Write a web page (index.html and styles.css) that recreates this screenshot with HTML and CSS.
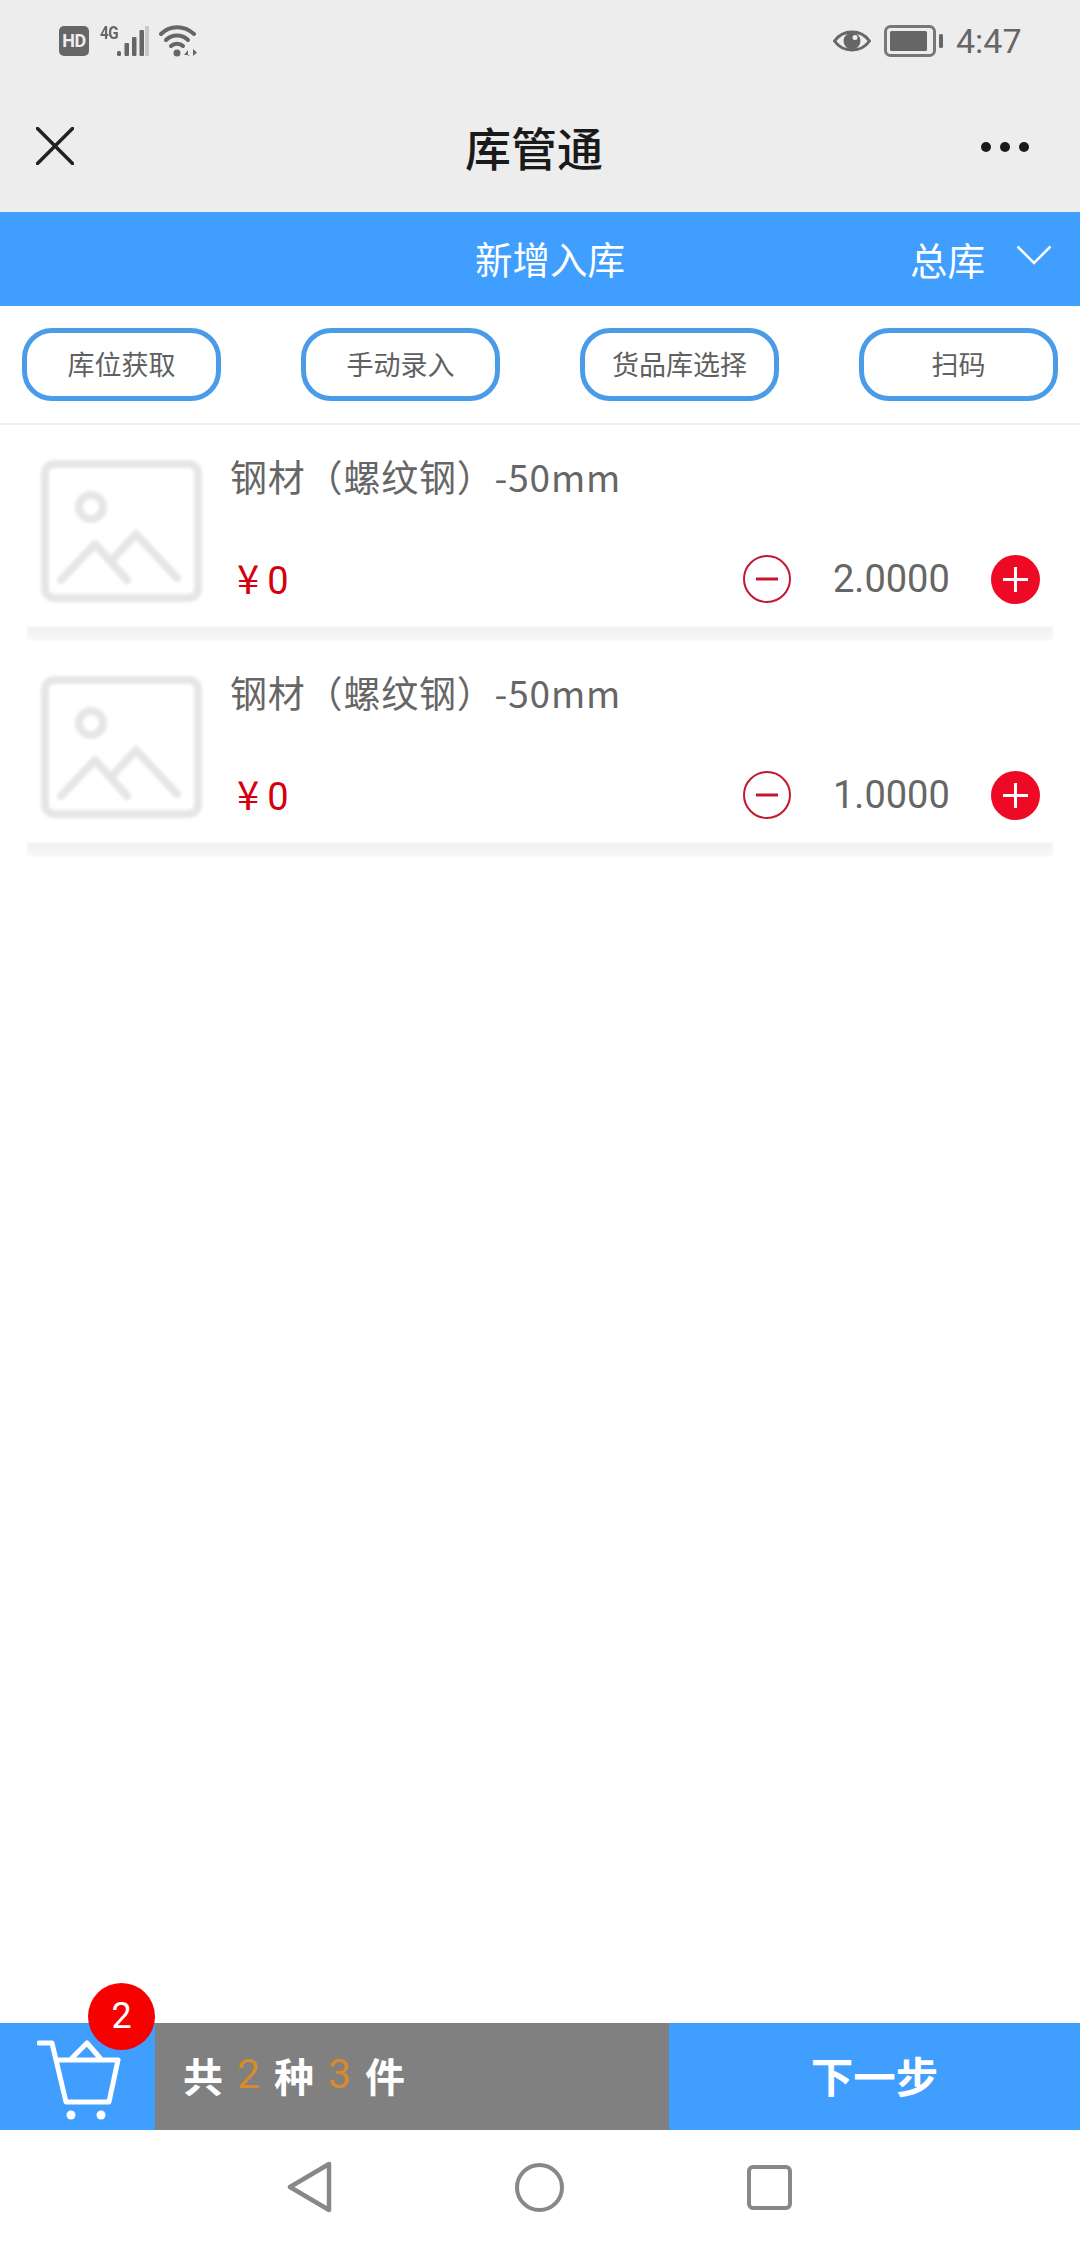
FILE: index.html
```html
<!DOCTYPE html>
<html lang="zh-CN">
<head>
<meta charset="utf-8">
<title>库管通</title>
<link rel="stylesheet" href="styles.css">
</head>
<body>
<div class="app">
  <header class="top">
    <div class="status">
      <div class="status-left">
        <span class="hd">HD</span>
        <div class="signal">
          <span class="net">4G</span>
          <svg class="bars" width="32" height="30" viewBox="0 0 32 30"><g fill="#666"><rect x="0" y="25" width="4" height="5" rx="1.5"/><rect x="7.500" y="17" width="4.500" height="13" rx="1"/><rect x="15" y="11" width="4.500" height="19" rx="1"/><rect x="22.500" y="4" width="4.500" height="26" rx="1"/></g><rect x="28" y="0" width="4" height="30" fill="#c9c9c9"/></svg>
        </div>
        <svg class="wifi" width="38" height="32" viewBox="0 0 38 32"><g fill="none" stroke="#666" stroke-width="4" stroke-linecap="round"><path d="M2 9C11 0 25 0 35 9"/><path d="M7 15C13 9 23 9 29 15"/><path d="M12 21C15 18 21 18 24 21"/></g><circle cx="18" cy="28" r="3.500" fill="#666"/><path d="M29 31V25L25 30H31M34 24V31L38 27.500Z" fill="#666"/></svg>
      </div>
      <div class="status-right">
        <svg class="eye" width="38" height="26" viewBox="0 0 38 26"><path d="M1.500 13C10 1 28 1 36.500 13C28 25 10 25 1.500 13Z" fill="none" stroke="#666" stroke-width="3"/><circle cx="19" cy="13" r="8.500" fill="#666"/><circle cx="22" cy="9.500" r="2.500" fill="#ededed"/></svg>
        <svg class="battery" width="60" height="32" viewBox="0 0 60 32"><rect x="1.500" y="1.500" width="49" height="29" rx="5" fill="none" stroke="#777" stroke-width="3"/><rect x="6" y="6" width="37" height="20" rx="1.500" fill="#666"/><rect x="55" y="9" width="4" height="14" rx="1.500" fill="#666"/></svg>
        <span class="time">4:47</span>
      </div>
    </div>
    <nav class="bar">
      <svg class="close" width="38" height="38" viewBox="0 0 38 38"><path d="M1.500 1.500L36.500 36.500M36.500 1.500L1.500 36.500" stroke="#222" stroke-width="3.500" stroke-linecap="round"/></svg>
      <h1 class="title">库管通</h1>
      <div class="dots"><i></i><i></i><i></i></div>
    </nav>
  </header>

  <section class="page-head">
    <span></span>
    <h2 class="page-title">新增入库</h2>
    <div class="store">
      <span>总库</span>
      <svg width="36" height="20" viewBox="0 0 36 20"><path d="M1.500 1.500L18 18L34.500 1.500" fill="none" stroke="#fff" stroke-width="2.500"/></svg>
    </div>
  </section>

  <div class="tools">
    <button class="tool">库位获取</button>
    <button class="tool">手动录入</button>
    <button class="tool">货品库选择</button>
    <button class="tool">扫码</button>
  </div>

  <main class="list">
    <article class="item">
      <div class="item-row">
        <svg class="thumb" width="161" height="142" viewBox="0 0 161 142"><g fill="none" stroke="#e6e6e6" stroke-width="8" stroke-linejoin="round" stroke-linecap="round"><rect x="4" y="4" width="153" height="134" rx="9"/><circle cx="50" cy="47" r="12"/><path d="M20 120L54 84L86 120M71 100L95 74L136 118"/></g></svg>
        <div class="info">
          <div class="name">钢材（螺纹钢）-50mm</div>
          <div class="line">
            <span class="price">¥<b>0</b></span>
            <div class="stepper">
              <svg width="48" height="48" viewBox="0 0 48 48"><circle cx="24" cy="24" r="23" fill="none" stroke="#c4162e" stroke-width="2"/><path d="M13 24H35" stroke="#c4162e" stroke-width="3"/></svg>
              <span class="qty">2.0000</span>
              <svg width="49" height="49" viewBox="0 0 49 49"><circle cx="24.500" cy="24.500" r="24.500" fill="#ee0a24"/><path d="M12 24.500H37M24.500 12V37" stroke="#fff" stroke-width="3"/></svg>
            </div>
          </div>
        </div>
      </div>
      <div class="shade"></div>
    </article>
    <article class="item">
      <div class="item-row">
        <svg class="thumb" width="161" height="142" viewBox="0 0 161 142"><g fill="none" stroke="#e6e6e6" stroke-width="8" stroke-linejoin="round" stroke-linecap="round"><rect x="4" y="4" width="153" height="134" rx="9"/><circle cx="50" cy="47" r="12"/><path d="M20 120L54 84L86 120M71 100L95 74L136 118"/></g></svg>
        <div class="info">
          <div class="name">钢材（螺纹钢）-50mm</div>
          <div class="line">
            <span class="price">¥<b>0</b></span>
            <div class="stepper">
              <svg width="48" height="48" viewBox="0 0 48 48"><circle cx="24" cy="24" r="23" fill="none" stroke="#c4162e" stroke-width="2"/><path d="M13 24H35" stroke="#c4162e" stroke-width="3"/></svg>
              <span class="qty">1.0000</span>
              <svg width="49" height="49" viewBox="0 0 49 49"><circle cx="24.500" cy="24.500" r="24.500" fill="#ee0a24"/><path d="M12 24.500H37M24.500 12V37" stroke="#fff" stroke-width="3"/></svg>
            </div>
          </div>
        </div>
      </div>
      <div class="shade"></div>
    </article>
  </main>

  <footer class="cart-bar">
    <div class="cart">
      <svg width="84" height="80" viewBox="0 0 84 80"><g fill="none" stroke="#fff" stroke-width="5" stroke-linecap="round" stroke-linejoin="round"><path d="M2 3H15L29 62H72L81 20H22"/><path d="M35 18L50 3L63 18"/></g><circle cx="34" cy="75" r="4.500" fill="#fff"/><circle cx="64" cy="75" r="4.500" fill="#fff"/></svg>
      <span class="badge">2</span>
    </div>
    <div class="summary"><span>共</span><em>2</em><span>种</span><em>3</em><span>件</span></div>
    <button class="next">下一步</button>
  </footer>

  <div class="sys-nav">
    <svg width="45" height="52" viewBox="0 0 45 52"><path d="M42 3V49L3 26Z" fill="none" stroke="#888" stroke-width="4.500" stroke-linejoin="round"/></svg>
    <svg width="49" height="49" viewBox="0 0 49 49"><circle cx="24.500" cy="24.500" r="22.500" fill="none" stroke="#888" stroke-width="4"/></svg>
    <svg width="45" height="45" viewBox="0 0 45 45"><rect x="2" y="2" width="41" height="41" rx="4" fill="none" stroke="#888" stroke-width="4"/></svg>
  </div>
</div>
</body>
</html>
```
FILE: styles.css
```css
* { box-sizing: border-box; }
html, body { margin: 0; padding: 0; background: #fff; }
body { font-family: "Noto Sans CJK SC", Roboto, sans-serif; }
.app { width: 1080px; height: 2244px; display: flex; flex-direction: column; overflow: hidden; }

.top { background: #ededed; height: 212px; flex: none; }
.status { height: 81px; padding: 0 61px 0 59px; display: flex; align-items: center; justify-content: space-between; }
.status-left, .status-right { display: flex; align-items: center; }
.status-left svg, .status-right svg { display: block; }
.hd { width: 30px; height: 30px; border-radius: 5px; background: #666; color: #eee; font: 700 18px/30px "Roboto", sans-serif; text-align: center; letter-spacing: -0.5px; }
.signal { position: relative; width: 49px; height: 30px; margin-left: 11px; }
.net { position: absolute; left: 0; top: -2px; color: #666; font: 700 18px/18px "Roboto", sans-serif; letter-spacing: -0.5px; transform: scaleX(.85); transform-origin: left; }
.bars { position: absolute; right: 0; top: 0; }
.wifi { margin-left: 10px; }
.eye { margin-right: 13px; }
.battery { margin-right: 12px; }
.time { color: #666; font: 400 34px/40px "Roboto", sans-serif; width: 63px; }

.bar { height: 131px; padding: 0 48px 0 36px; display: grid; grid-template-columns: 1fr auto 1fr; align-items: center; }
.close { display: block; margin-top: -2px; }
.title { margin: -2px 0 0; font-size: 46px; line-height: 60px; font-weight: 500; color: #1a1a1a; }
.dots { justify-self: end; display: flex; gap: 9px; margin-right: 3px; }
.dots i { width: 10px; height: 10px; border-radius: 50%; background: #1a1a1a; display: block; }

.page-head { background: #409eff; height: 94px; flex: none; padding: 0 28px 0 48px; display: grid; grid-template-columns: 1fr auto 1fr; align-items: center; color: #fff; }
.page-title { margin: -3px 0 0; font-size: 37.5px; line-height: 50px; font-weight: 400; }
.store { justify-self: end; display: flex; align-items: center; gap: 31px; font-size: 37.5px; line-height: 50px; }
.store svg { display: block; margin-top: -8px; }

.tools { height: 119px; flex: none; padding: 0 22px 1px 22px; display: flex; align-items: center; justify-content: space-between; border-bottom: 2px solid #eeeeee; }
.tool { width: 199px; height: 73px; border: 5.500px solid #4a9be8; border-radius: 30px; background: #fff; padding: 0 0 2px; font-family: inherit; font-size: 27px; color: #606060; }

.list { flex: 1; }
.item { height: 216px; display: flex; flex-direction: column; }
.item-row { height: 202px; margin: 0 27px; padding: 0 13px 0 14px; display: flex; gap: 30px; }
.thumb { display: block; flex: none; margin-top: 35px; filter: blur(1.4px); }
.info { flex: 1; padding-top: 26px; }
.name { font-size: 37px; line-height: 50px; color: #666; letter-spacing: 0.8px; margin-left: -2px; }
.line { height: 48px; margin-top: 54px; display: flex; align-items: center; justify-content: space-between; }
.price { padding-left: 5px; font: 400 40px/48px "Noto Sans CJK SC", sans-serif; color: #d4000f; }
.price b { font: 400 38px/48px Roboto, sans-serif; margin-left: 8px; }
.stepper { display: flex; align-items: center; gap: 42px; }
.stepper svg { display: block; flex: none; }
.qty { width: 116px; text-align: right; font: 400 38px/48px Roboto, sans-serif; color: #666; }
.shade { height: 14px; margin: 0 27px; background: linear-gradient(#f0f0f0, #f9f9f9); border-radius: 3px; filter: blur(1px); }

.cart-bar { height: 107px; flex: none; display: flex; color: #fff; }
.cart { position: relative; width: 155px; background: #409eff; padding: 17px 0 0 37px; }
.cart svg { display: block; }
.badge { position: absolute; left: 88px; top: -40px; width: 67px; height: 67px; border-radius: 50%; background: #f60000; text-align: center; font: 400 36px/67px Roboto, sans-serif; }
.summary { width: 514px; background: #808080; padding: 0 0 4px 28px; display: flex; align-items: center; gap: 14px; font-size: 40px; font-weight: 700; }
.summary em { font: 400 41px/1 Roboto, sans-serif; color: #d98a2c; }
.next { flex: 1; border: 0; background: #409eff; color: #fff; font-family: inherit; font-size: 42.5px; font-weight: 700; padding: 0 0 4px; }

.sys-nav { height: 114px; flex: none; padding-right: 2px; display: flex; align-items: center; justify-content: center; gap: 183px; }
.sys-nav svg { display: block; }
```
